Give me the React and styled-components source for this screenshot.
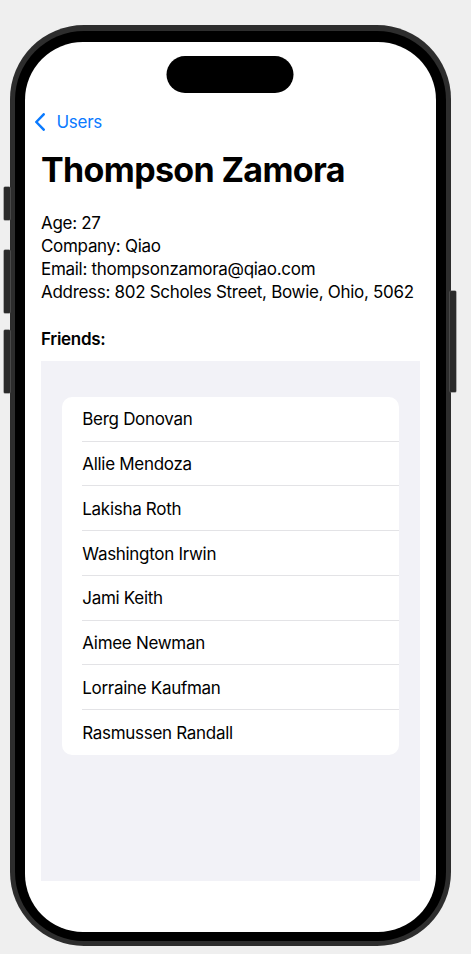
import React from "react";
import styled, { createGlobalStyle } from "styled-components";

const GlobalStyle = createGlobalStyle`
  html, body { margin: 0; padding: 0; background: #efefef; }
  body {
    font-family: Inter, "Noto Sans", "Liberation Sans", sans-serif;
    -webkit-font-smoothing: antialiased;
  }
  * { box-sizing: border-box; }
`;

const Page = styled.div`
  width: 471px;
  height: 954px;
  padding: 25px 0 0 9.5px;
  overflow: hidden;
`;

const Shell = styled.div`
  position: relative;
  width: 441.5px;
  height: 921px;
  padding: 5.5px;
  border-radius: 74px;
  background: #2d2d2d;
`;

const SideButton = styled.div`
  position: absolute;
  width: 6px;
  top: ${(p) => p.$top}px;
  height: ${(p) => p.$height}px;
  ${(p) => (p.$right ? "right: -5px;" : "left: -6px;")}
  background: #2a2a2a;
  border-radius: 1px;
  box-shadow: 0 0 0 0.5px #666;
`;

const Bezel = styled.div`
  position: relative;
  height: 100%;
  padding: 11px 10px 8.5px 10px;
  border-radius: 69px;
  background: #000;
`;

const Screen = styled.div`
  position: relative;
  height: 100%;
  background: #fff;
  border-radius: 58px;
  overflow: hidden;
  display: flex;
  flex-direction: column;
`;

const Island = styled.div`
  position: absolute;
  top: 14px;
  left: 50%;
  transform: translateX(-50%);
  width: 127px;
  height: 37px;
  border-radius: 19px;
  background: #000;
`;

const NavBar = styled.div`
  margin-top: 69px;
  height: 22px;
  padding-left: 9.5px;
  display: flex;
  align-items: center;
  gap: 12px;
  color: #0a7aff;
  font-size: 17px;
  line-height: 22px;
  letter-spacing: -0.3px;
`;

const Content = styled.div`
  padding: 0 16px;
  display: flex;
  flex-direction: column;
`;

const Title = styled.h1`
  margin: 16.3px 0 0 0;
  font-size: 34px;
  line-height: 41px;
  font-weight: 700;
  letter-spacing: -0.65px;
  color: #000;
`;

const Info = styled.div`
  margin-top: 22.6px;
  font-size: 17px;
  line-height: 22.75px;
  letter-spacing: -0.3px;
  color: #000;
`;

const Line = styled.div``;

const SectionLabel = styled.div`
  margin-top: 24.7px;
  font-size: 17px;
  line-height: 22.75px;
  font-weight: 600;
  letter-spacing: -0.3px;
  color: #000;
`;

const Grouped = styled.div`
  margin-top: 10.1px;
  height: 519.7px;
  background: #f2f2f7;
  padding: 36px 20.7px 0 21.3px;
`;

const Card = styled.ul`
  margin: 0;
  padding: 0 0 0 20px;
  list-style: none;
  background: #fff;
  border-radius: 10px;
`;

const Row = styled.li`
  height: 44.75px;
  padding-top: 1px;
  display: flex;
  align-items: center;
  font-size: 17px;
  letter-spacing: -0.3px;
  color: #000;
  border-bottom: ${(p) => (p.$last ? "none" : "1px solid #e3e3e6")};
`;

const friends = [
  "Berg Donovan",
  "Allie Mendoza",
  "Lakisha Roth",
  "Washington Irwin",
  "Jami Keith",
  "Aimee Newman",
  "Lorraine Kaufman",
  "Rasmussen Randall",
];

const Chevron = () => (
  <svg width="10" height="18" viewBox="0 0 10 18" fill="none">
    <path
      d="M8.7 1.3 L1.3 9 L8.7 16.7"
      stroke="#0a7aff"
      strokeWidth="2.5"
      strokeLinecap="round"
      strokeLinejoin="round"
    />
  </svg>
);

export default function App() {
  return (
    <Page>
      <GlobalStyle />
      <Shell>
        <SideButton $top={161.7} $height={33.3} />
        <SideButton $top={225} $height={63} />
        <SideButton $top={305} $height={62.7} />
        <SideButton $right $top={265.7} $height={101.3} />
        <Bezel>
          <Screen>
            <Island />
            <NavBar>
              <Chevron />
              <span>Users</span>
            </NavBar>
            <Content>
              <Title>Thompson Zamora</Title>
              <Info>
                <Line>Age: 27</Line>
                <Line>Company: Qiao</Line>
                <Line>Email: thompsonzamora@qiao.com</Line>
                <Line>Address: 802 Scholes Street, Bowie, Ohio, 5062</Line>
              </Info>
              <SectionLabel>Friends:</SectionLabel>
              <Grouped>
                <Card>
                  {friends.map((f, i) => (
                    <Row key={f} $last={i === friends.length - 1}>
                      {f}
                    </Row>
                  ))}
                </Card>
              </Grouped>
            </Content>
          </Screen>
        </Bezel>
      </Shell>
    </Page>
  );
}
